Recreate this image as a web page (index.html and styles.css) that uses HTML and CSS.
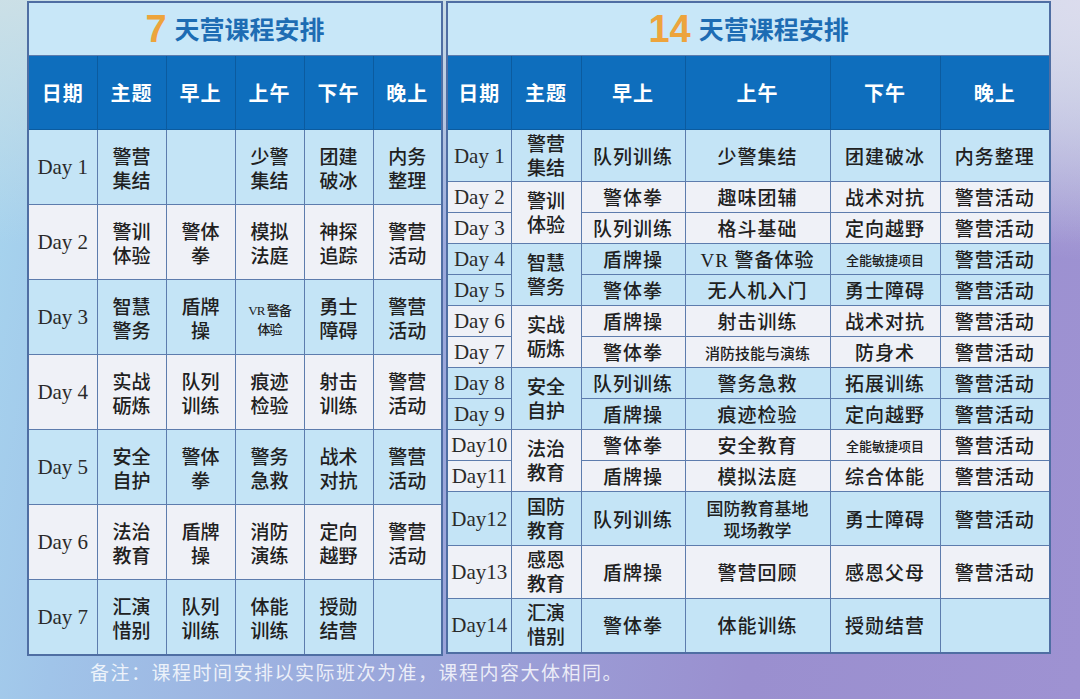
FILE: index.html
```html
<!DOCTYPE html>
<html lang="zh-CN">
<head>
<meta charset="utf-8">
<title>天营课程安排</title>
<link rel="stylesheet" href="styles.css">
</head>
<body>
<div class="page">
  <div class="tables">
    <table class="sched t7">
      <colgroup>
        <col class="c69"><col class="c69"><col class="c69"><col class="c69"><col class="c69"><col class="c69">
      </colgroup>
      <thead>
        <tr class="title"><td colspan="6"><span class="num">7</span><span class="txt">天营课程安排</span></td></tr>
        <tr class="head"><th>日期</th><th>主题</th><th>早上</th><th>上午</th><th>下午</th><th>晚上</th></tr>
      </thead>
      <tbody>
        <tr class="b r75"><td class="day">Day 1</td><td><span class="ln">警营</span><span class="ln">集结</span></td><td></td><td><span class="ln">少警</span><span class="ln">集结</span></td><td><span class="ln">团建</span><span class="ln">破冰</span></td><td><span class="ln">内务</span><span class="ln">整理</span></td></tr>
        <tr class="w r75"><td class="day">Day 2</td><td><span class="ln">警训</span><span class="ln">体验</span></td><td><span class="ln">警体</span><span class="ln">拳</span></td><td><span class="ln">模拟</span><span class="ln">法庭</span></td><td><span class="ln">神探</span><span class="ln">追踪</span></td><td><span class="ln">警营</span><span class="ln">活动</span></td></tr>
        <tr class="b r75"><td class="day">Day 3</td><td><span class="ln">智慧</span><span class="ln">警务</span></td><td><span class="ln">盾牌</span><span class="ln">操</span></td><td class="tiny"><span class="ln">VR 警备</span><span class="ln">体验</span></td><td><span class="ln">勇士</span><span class="ln">障碍</span></td><td><span class="ln">警营</span><span class="ln">活动</span></td></tr>
        <tr class="w r75"><td class="day">Day 4</td><td><span class="ln">实战</span><span class="ln">砺炼</span></td><td><span class="ln">队列</span><span class="ln">训练</span></td><td><span class="ln">痕迹</span><span class="ln">检验</span></td><td><span class="ln">射击</span><span class="ln">训练</span></td><td><span class="ln">警营</span><span class="ln">活动</span></td></tr>
        <tr class="b r75"><td class="day">Day 5</td><td><span class="ln">安全</span><span class="ln">自护</span></td><td><span class="ln">警体</span><span class="ln">拳</span></td><td><span class="ln">警务</span><span class="ln">急救</span></td><td><span class="ln">战术</span><span class="ln">对抗</span></td><td><span class="ln">警营</span><span class="ln">活动</span></td></tr>
        <tr class="w r75"><td class="day">Day 6</td><td><span class="ln">法治</span><span class="ln">教育</span></td><td><span class="ln">盾牌</span><span class="ln">操</span></td><td><span class="ln">消防</span><span class="ln">演练</span></td><td><span class="ln">定向</span><span class="ln">越野</span></td><td><span class="ln">警营</span><span class="ln">活动</span></td></tr>
        <tr class="b r75"><td class="day">Day 7</td><td><span class="ln">汇演</span><span class="ln">惜别</span></td><td><span class="ln">队列</span><span class="ln">训练</span></td><td><span class="ln">体能</span><span class="ln">训练</span></td><td><span class="ln">授勋</span><span class="ln">结营</span></td><td></td></tr>
      </tbody>
    </table>

    <table class="sched t14">
      <colgroup>
        <col class="c64"><col class="c70"><col class="c104"><col class="c145"><col class="c110"><col class="c110">
      </colgroup>
      <thead>
        <tr class="title"><td colspan="6"><span class="num">14</span><span class="txt">天营课程安排</span></td></tr>
        <tr class="head"><th>日期</th><th>主题</th><th>早上</th><th>上午</th><th>下午</th><th>晚上</th></tr>
      </thead>
      <tbody>
        <tr class="b r52"><td class="day">Day 1</td><td class="theme"><span class="ln">警营</span><span class="ln">集结</span></td><td>队列训练</td><td>少警集结</td><td>团建破冰</td><td>内务整理</td></tr>
        <tr class="w r31"><td class="day">Day 2</td><td class="theme" rowspan="2"><span class="ln">警训</span><span class="ln">体验</span></td><td>警体拳</td><td>趣味团辅</td><td>战术对抗</td><td>警营活动</td></tr>
        <tr class="w r31"><td class="day">Day 3</td><td>队列训练</td><td>格斗基础</td><td>定向越野</td><td>警营活动</td></tr>
        <tr class="b r31"><td class="day">Day 4</td><td class="theme" rowspan="2"><span class="ln">智慧</span><span class="ln">警务</span></td><td>盾牌操</td><td>VR 警备体验</td><td class="small">全能敏捷项目</td><td>警营活动</td></tr>
        <tr class="b r31"><td class="day">Day 5</td><td>警体拳</td><td>无人机入门</td><td>勇士障碍</td><td>警营活动</td></tr>
        <tr class="w r31"><td class="day">Day 6</td><td class="theme" rowspan="2"><span class="ln">实战</span><span class="ln">砺炼</span></td><td>盾牌操</td><td>射击训练</td><td>战术对抗</td><td>警营活动</td></tr>
        <tr class="w r31"><td class="day">Day 7</td><td>警体拳</td><td class="mid">消防技能与演练</td><td>防身术</td><td>警营活动</td></tr>
        <tr class="b r31"><td class="day">Day 8</td><td class="theme" rowspan="2"><span class="ln">安全</span><span class="ln">自护</span></td><td>队列训练</td><td>警务急救</td><td>拓展训练</td><td>警营活动</td></tr>
        <tr class="b r31"><td class="day">Day 9</td><td>盾牌操</td><td>痕迹检验</td><td>定向越野</td><td>警营活动</td></tr>
        <tr class="w r31"><td class="day">Day10</td><td class="theme" rowspan="2"><span class="ln">法治</span><span class="ln">教育</span></td><td>警体拳</td><td>安全教育</td><td class="small">全能敏捷项目</td><td>警营活动</td></tr>
        <tr class="w r31"><td class="day">Day11</td><td>盾牌操</td><td>模拟法庭</td><td>综合体能</td><td>警营活动</td></tr>
        <tr class="b r54"><td class="day">Day12</td><td class="theme"><span class="ln">国防</span><span class="ln">教育</span></td><td>队列训练</td><td class="two"><span class="ln">国防教育基地</span><span class="ln">现场教学</span></td><td>勇士障碍</td><td>警营活动</td></tr>
        <tr class="w r53"><td class="day">Day13</td><td class="theme"><span class="ln">感恩</span><span class="ln">教育</span></td><td>盾牌操</td><td>警营回顾</td><td>感恩父母</td><td>警营活动</td></tr>
        <tr class="b r54"><td class="day">Day14</td><td class="theme"><span class="ln">汇演</span><span class="ln">惜别</span></td><td>警体拳</td><td>体能训练</td><td>授勋结营</td><td></td></tr>
      </tbody>
    </table>
  </div>
  <p class="note">备注：课程时间安排以实际班次为准，课程内容大体相同。</p>
</div>
</body>
</html>
```

FILE: styles.css
```css
html, body {
  margin: 0;
  padding: 0;
}

body {
  width: 1080px;
  height: 699px;
  overflow: hidden;
  font-family: "Noto Sans CJK SC", sans-serif;
  background:
    radial-gradient(circle at 100% 0%, rgba(220, 220, 238, 0.95) 0, rgba(220, 220, 238, 0) 260px),
    linear-gradient(to bottom, rgba(205, 224, 230, 0.95) 0%, rgba(168, 213, 238, 0) 35%),
    linear-gradient(100deg, #a8d7ef 0%, #a0c4e9 14%, #9ba7db 42%, #9a8fcf 72%, #9e92d2 100%);
}

.page {
  padding: 1px 0 0 27px;
}

.tables {
  display: flex;
  gap: 3px;
  align-items: flex-start;
}

.sched {
  border-collapse: collapse;
  table-layout: fixed;
  border: 2px solid #4f6ea3;
  color: #202020;
}

.t7 { width: 416px; }
.t14 { width: 605px; }

.c69 { width: 69px; }
.c64 { width: 64px; }
.c70 { width: 70px; }
.c104 { width: 104px; }
.c145 { width: 145px; }
.c110 { width: 110px; }

.sched td,
.sched th {
  border: 1px solid #5d7cad;
  padding: 0;
  text-align: center;
  vertical-align: middle;
  font-size: 19px;
  line-height: 24px;
  font-weight: 500;
}

.sched tbody td {
  font-family: "Liberation Serif", "Noto Sans CJK SC", serif;
  padding-top: 6px;
}

.ln {
  display: block;
  height: 24px;
  line-height: 24px;
  white-space: nowrap;
}

.title td {
  height: 52px;
  background: #c8e7f8;
  white-space: nowrap;
}

.title .num {
  font-family: "Liberation Sans", sans-serif;
  font-weight: 700;
  font-size: 38px;
  color: #eda43c;
  margin-right: 8px;
  vertical-align: -3px;
}

.title .txt {
  font-family: "Noto Sans CJK SC", sans-serif;
  font-weight: 700;
  font-size: 25px;
  color: #1d6cb3;
}

.head th {
  height: 73px;
  background: #0e6ebd;
  color: #ffffff;
  font-weight: 700;
  font-size: 20px;
  letter-spacing: 1px;
  border-color: #0b5b9f;
}

.b td { background: #c4e4f6; }
.w td { background: #eff1f7; }

.r75 { height: 75px; }
.r52 { height: 52px; }
.r31 { height: 31px; }
.r53 { height: 53px; }
.r54 { height: 54px; }

.t14 tbody td {
  letter-spacing: 1px;
  padding-top: 4px;
}

.t14 tbody td.theme {
  letter-spacing: 0;
  padding-top: 2px;
}

.sched tbody td.day {
  font-family: "Liberation Serif", serif;
  font-weight: 400;
  font-size: 21px;
  letter-spacing: 0;
  color: #2a2a2a;
  padding-top: 0;
}

.sched td.tiny {
  font-size: 13px;
  letter-spacing: -1px;
}

.sched td.tiny .ln {
  height: 19px;
  line-height: 19px;
}

.t14 td.small {
  font-size: 13px;
  letter-spacing: 0;
}

.t14 td.mid {
  font-size: 15px;
  letter-spacing: 0;
}

.t14 td.two {
  font-size: 17px;
  letter-spacing: 0;
}

.t14 td.two .ln {
  height: 22px;
  line-height: 22px;
}

.note {
  margin: 4px 0 0 63px;
  font-size: 19px;
  line-height: 24px;
  letter-spacing: 1.5px;
  color: rgba(255, 255, 255, 0.82);
}
```
